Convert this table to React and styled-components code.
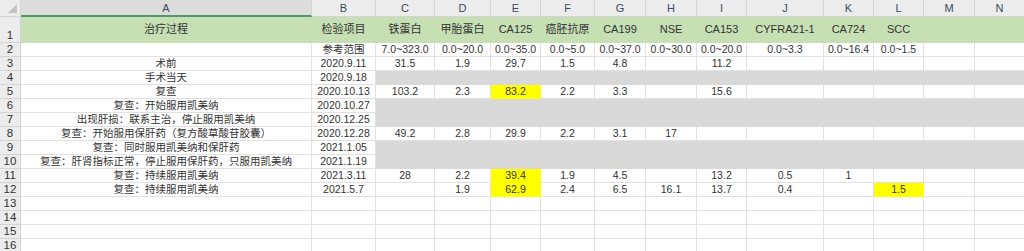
import React from 'react'
import styled, { createGlobalStyle } from 'styled-components'

const GlobalStyle = createGlobalStyle`
    body {
        margin: 0;
        background: #ffffff;
        font-family: "Liberation Sans", "Noto Sans CJK SC", sans-serif;
        overflow: hidden;
    }
`

const COLS = [291, 64, 59, 56, 50, 54, 51, 51, 50, 77, 50, 50, 51, 50]
const LETTERS = ['A', 'B', 'C', 'D', 'E', 'F', 'G', 'H', 'I', 'J', 'K', 'L', 'M', 'N']

const GREEN = '#c6e0b4'
const GRAY = '#d9d9d9'
const YELLOW = '#ffff00'

const Sheet = styled.div`
    display: grid;
    grid-template-columns: 21px ${COLS.map(w => `${w}px`).join(' ')};
    grid-template-rows: 17px 26px repeat(15, 14px);
    width: 1025px;
    height: 251px;
    overflow: hidden;
    font-size: 10.5px;
    color: #333333;
`

const Corner = styled.div`
    position: relative;
    background: #ececec;
    border-right: 1px solid #d4d4d4;
    border-bottom: 1px solid #d4d4d4;

    &::after {
        content: '';
        position: absolute;
        right: 3px;
        bottom: 3px;
        border-style: solid;
        border-width: 0 0 9px 9px;
        border-color: transparent transparent #c4c4c4 transparent;
    }
`

const ColHead = styled.div`
    display: flex;
    align-items: center;
    justify-content: center;
    background: ${p => (p.$selected ? '#dcdcdc' : '#ececec')};
    border-right: 1px solid #d4d4d4;
    border-bottom: ${p => (p.$selected ? '2px solid #4f9a6a' : '1px solid #d4d4d4')};
    color: #3c4a58;
    font-size: 11px;
`

const RowHead = styled.div`
    display: flex;
    align-items: ${p => (p.$tall ? 'flex-end' : 'center')};
    justify-content: center;
    background: #ececec;
    border-right: 1px solid #d4d4d4;
    border-bottom: 1px solid #d4d4d4;
    color: #333333;
    font-size: 11.5px;
    line-height: 13px;
`

const Cell = styled.div`
    display: flex;
    align-items: center;
    justify-content: center;
    white-space: nowrap;
    overflow: visible;
    background: ${p => p.$fill || '#ffffff'};
    border-right: 1px solid ${p => p.$fill || '#e1e1e1'};
    border-bottom: 1px solid ${p => p.$fill || '#e1e1e1'};
    font-size: ${p => (p.$head ? '11px' : '10.5px')};
    line-height: 13px;
`

const header = ['治疗过程', '检验项目', '铁蛋白', '甲胎蛋白', 'CA125', '癌胚抗原', 'CA199', 'NSE', 'CA153', 'CYFRA21-1', 'CA724', 'SCC', '', '']

// y = yellow cells by column index, gap = gray fill from column C on
const rows = [
    { cells: ['', '参考范围', '7.0~323.0', '0.0~20.0', '0.0~35.0', '0.0~5.0', '0.0~37.0', '0.0~30.0', '0.0~20.0', '0.0~3.3', '0.0~16.4', '0.0~1.5'] },
    { cells: ['术前', '2020.9.11', '31.5', '1.9', '29.7', '1.5', '4.8', '', '11.2'] },
    { cells: ['手术当天', '2020.9.18'], gap: true },
    { cells: ['复查', '2020.10.13', '103.2', '2.3', '83.2', '2.2', '3.3', '', '15.6'], y: [4] },
    { cells: ['复查：开始服用凯美纳', '2020.10.27'], gap: true },
    { cells: ['出现肝损：联系主治，停止服用凯美纳', '2020.12.25'], gap: true },
    { cells: ['复查：开始服用保肝药（复方酸草酸苷胶囊）', '2020.12.28', '49.2', '2.8', '29.9', '2.2', '3.1', '17'] },
    { cells: ['复查：同时服用凯美纳和保肝药', '2021.1.05'], gap: true },
    { cells: ['复查：肝肾指标正常，停止服用保肝药，只服用凯美纳', '2021.1.19'], gap: true },
    { cells: ['复查：持续服用凯美纳', '2021.3.11', '28', '2.2', '39.4', '1.9', '4.5', '', '13.2', '0.5', '1'], y: [4] },
    { cells: ['复查：持续服用凯美纳', '2021.5.7', '', '1.9', '62.9', '2.4', '6.5', '16.1', '13.7', '0.4', '', '1.5'], y: [4, 11] },
    { cells: [] },
    { cells: [] },
    { cells: [] },
    { cells: [] },
]

const cellFill = (row, i) => {
    if (row.gap && i >= 2) return GRAY
    if (row.y && row.y.includes(i)) return YELLOW
    return undefined
}

const App = () => {
    return (
        <>
            <GlobalStyle />
            <Sheet>
                <Corner />
                {LETTERS.map(l => (
                    <ColHead key={l} $selected={l === 'A'}>{l}</ColHead>
                ))}

                <RowHead $tall>1</RowHead>
                {header.map((h, i) => (
                    <Cell key={`h${i}`} $fill={GREEN} $head>{h}</Cell>
                ))}

                {rows.map((row, r) => (
                    <React.Fragment key={r}>
                        <RowHead>{r + 2}</RowHead>
                        {COLS.map((_, i) => (
                            <Cell key={i} $fill={cellFill(row, i)}>{row.cells[i] || ''}</Cell>
                        ))}
                    </React.Fragment>
                ))}
            </Sheet>
        </>
    )
}

export default App
